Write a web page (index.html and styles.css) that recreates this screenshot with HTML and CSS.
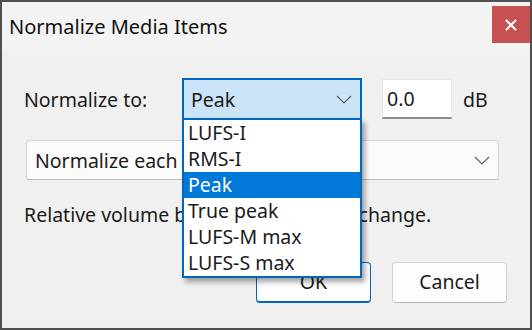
FILE: index.html
```html
<!DOCTYPE html>
<html>
<head>
  <meta charset="utf-8">
  <link rel="stylesheet" href="styles.css">
</head>
<body>
  <div class="window">
    <div class="titlebar">
      <span class="title">Normalize Media Items</span>
      <div class="close-btn">
        <svg width="12" height="12" viewBox="0 0 12 12">
          <path d="M1 1 L11 11 M11 1 L1 11" stroke="#fff" stroke-width="2.2" fill="none"/>
        </svg>
      </div>
    </div>

    <div class="content">
      <div class="target-row">
        <label class="label">Normalize to:</label>
        <div class="combo combo-open">
          <span>Peak</span>
          <svg class="chevron" width="16" height="9" viewBox="0 0 16 9">
            <path d="M1 1 L8 8 L15 1" stroke="#5f5f5f" stroke-width="1.2" fill="none"/>
          </svg>
          <ul class="dropdown">
            <li>LUFS-I</li>
            <li>RMS-I</li>
            <li class="selected">Peak</li>
            <li>True peak</li>
            <li>LUFS-M max</li>
            <li>LUFS-S max</li>
          </ul>
        </div>
        <div class="num-box">0.0</div>
        <span class="unit">dB</span>
      </div>

      <div class="combo combo-wide">
        <span>Normalize each item separately</span>
        <svg class="chevron" width="16" height="9" viewBox="0 0 16 9">
          <path d="M1 1 L8 8 L15 1" stroke="#5f5f5f" stroke-width="1.2" fill="none"/>
        </svg>
      </div>

      <p class="note">Relative volume between items may change.</p>

      <div class="buttons">
        <div class="btn btn-default">OK</div>
        <div class="btn">Cancel</div>
      </div>
    </div>
  </div>
</body>
</html>
```

FILE: styles.css
```css
body {
  margin: 0;
  font-family: "Noto Sans", "Open Sans", sans-serif;
  color: #1a1a1a;
}

.window {
  width: 532px;
  height: 330px;
  box-sizing: border-box;
  border: 2px solid #4f4f4f;
  background-color: #f0f0f0;
  display: flex;
  flex-direction: column;
}

.titlebar {
  height: 49px;
  background-color: #f3f3f3;
  display: flex;
  align-items: flex-start;
  justify-content: space-between;
}

.title {
  font-size: 20px;
  line-height: 26px;
  margin: 12px 0 0 7px;
  color: #111;
}

.close-btn {
  width: 38px;
  height: 37px;
  margin: 4px 0 0 0;
  background-color: #c75050;
  display: flex;
  align-items: center;
  justify-content: center;
}

.content {
  padding: 27px 23px 0 22px;
  font-size: 19.5px;
}

.target-row {
  display: flex;
  align-items: center;
  height: 42px;
}

.label {
  width: 158px;
}

.combo {
  position: relative;
  box-sizing: border-box;
  display: flex;
  align-items: center;
  justify-content: space-between;
}

.combo-open {
  width: 180px;
  height: 42px;
  padding: 0 8px 0 7px;
  background-color: #cce4f7;
  border: 2px solid #0067c0;
  z-index: 2;
}

.chevron {
  display: block;
}

.dropdown {
  position: absolute;
  top: 100%;
  left: -2px;
  width: 180px;
  margin: 0;
  padding: 0;
  list-style: none;
  background-color: white;
  border: 2px solid #0067c0;
  box-sizing: border-box;
  box-shadow: 3px 4px 5px rgba(0, 0, 0, 0.35);
}

.dropdown li {
  height: 26px;
  line-height: 26px;
  padding-left: 4px;
}

.dropdown li.selected {
  background-color: #0078d7;
  color: white;
}

.num-box {
  width: 70px;
  height: 40px;
  margin-left: 20px;
  padding-left: 4px;
  box-sizing: border-box;
  background-color: white;
  border: 1px solid #e6e6e6;
  border-bottom: 2px solid #8a8a8a;
  line-height: 37px;
}

.unit {
  margin-left: 11px;
}

.combo-wide {
  width: 473px;
  height: 40px;
  margin: 20px 0 0 2px;
  padding: 0 8px 0 8px;
  background-color: #fbfbfb;
  border: 1px solid #d6d6d6;
  border-bottom-color: #bdbdbd;
  border-radius: 3px;
  overflow: hidden;
}

.note {
  margin: 22px 0 0 0;
  line-height: 26px;
}

.buttons {
  display: flex;
  justify-content: flex-end;
  gap: 21px;
  margin-top: 34px;
}

.btn {
  width: 115px;
  height: 41px;
  box-sizing: border-box;
  background-color: #fdfdfd;
  border: 1px solid #d3d3d3;
  border-bottom-color: #bcbcbc;
  border-radius: 4px;
  text-align: center;
  line-height: 38px;
}

.btn-default {
  border: 1px solid #0067c0;
  border-bottom-width: 2px;
}
```
